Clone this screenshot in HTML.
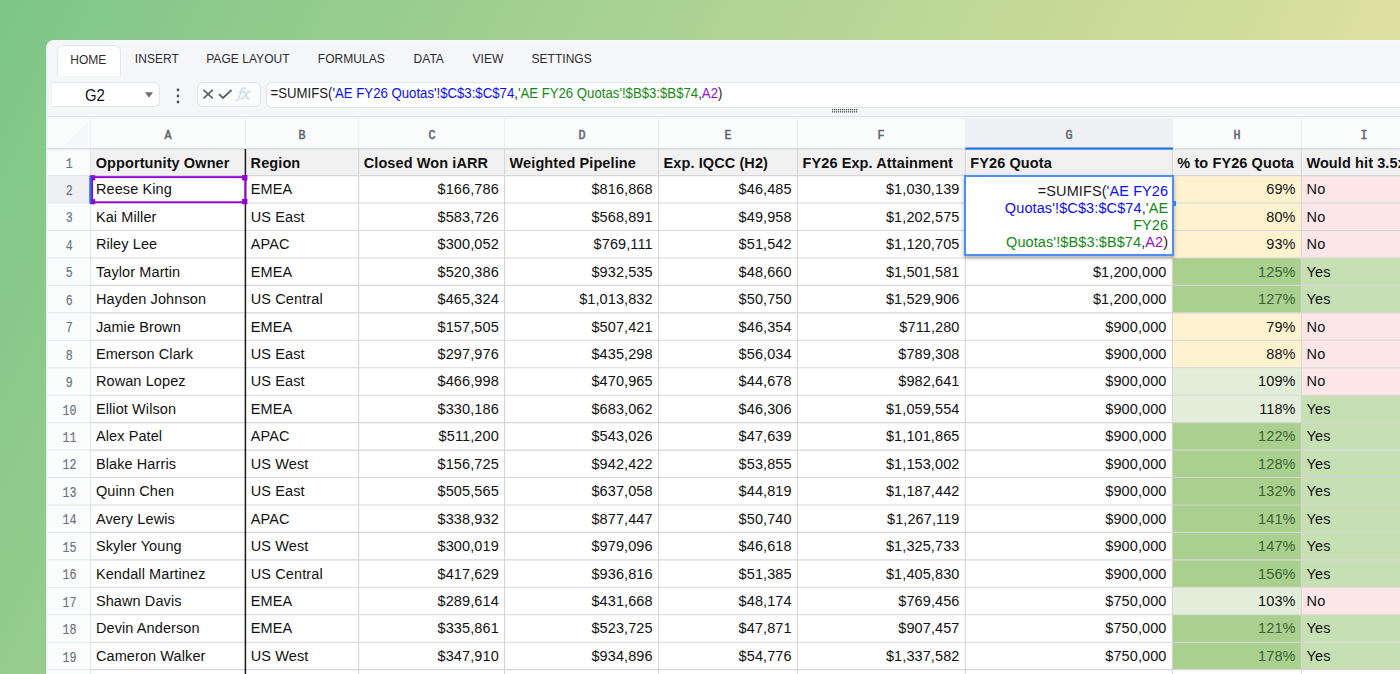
<!DOCTYPE html>
<html><head><meta charset="utf-8"><style>
*{box-sizing:border-box;margin:0;padding:0}
html,body{width:1400px;height:674px;overflow:hidden}
body{position:relative;font-family:"Liberation Sans",sans-serif;background:linear-gradient(116deg,#7dc688 0%,#f2e6a3 100%);}
.a{position:absolute}
.win{position:absolute;left:46px;top:40px;width:1400px;height:700px;background:#f5f6f8;border-top-left-radius:8px;overflow:hidden;border-left:1.5px solid #e8e8f1;border-top:1px solid #f8f8fb}
.tab{position:absolute;top:0;font-size:12px;color:#2b2d31;letter-spacing:0.05px;white-space:nowrap;line-height:14px}
.t{position:absolute;white-space:nowrap;font-size:14.5px;color:#111;line-height:16px;letter-spacing:0.1px;transform:scaleY(1.055);transform-origin:0 2.5px}
.r{text-align:right}
.hl{position:absolute;background:#d8d8d8;height:1px}
.vl{position:absolute;background:#d8d8d8;width:1px}
.mono{font-family:"Liberation Mono",monospace;color:#6a717b;font-size:14px;position:absolute;text-align:center;white-space:nowrap;line-height:14px}.mono span{display:inline-block;transform:scaleX(0.83);-webkit-text-stroke:0.15px #6a717b}
</style></head><body>

<div class="win"></div>
<div class="a" style="left:57px;top:45px;width:64px;height:31px;background:#fff;border:1px solid #e3e6ec;border-bottom:none;border-radius:6px 6px 0 0"></div>
<div class="tab" style="left:70.2px;top:52.6px">HOME</div>
<div class="tab" style="left:134.79999999999998px;top:52.0px">INSERT</div>
<div class="tab" style="left:206.2px;top:52.0px">PAGE LAYOUT</div>
<div class="tab" style="left:317.8px;top:52.0px">FORMULAS</div>
<div class="tab" style="left:413.5px;top:52.0px">DATA</div>
<div class="tab" style="left:472.5px;top:52.0px">VIEW</div>
<div class="tab" style="left:531.4000000000001px;top:52.0px">SETTINGS</div>
<div class="a" style="left:51px;top:82.2px;width:108.8px;height:24.6px;background:#fff;border:1px solid #e1e4ea;border-left:1px solid #eef0f3;border-radius:0 6px 6px 0"></div>
<div class="a" style="left:85px;top:87px;font-size:14.9px;color:#111;line-height:18px;transform:scaleY(1.1);transform-origin:0 14px">G2</div>
<svg class="a" style="left:144px;top:91px" width="10" height="8" viewBox="0 0 10 8"><path d="M1 1.2 L9 1.2 L5 6.8 Z" fill="#6b6e74"/></svg>
<svg class="a" style="left:175px;top:87px" width="6" height="18" viewBox="0 0 6 18"><circle cx="3" cy="3" r="1.4" fill="#50545a"/><circle cx="3" cy="9" r="1.4" fill="#50545a"/><circle cx="3" cy="15" r="1.4" fill="#50545a"/></svg>
<div class="a" style="left:196.5px;top:82.2px;width:64px;height:24.6px;background:#fbfcfc;border:1px solid #e1e4ea;border-radius:6px"></div>
<svg class="a" style="left:201px;top:88px" width="14" height="12" viewBox="0 0 14 12"><path d="M2.5 1.8 L11.8 10.3 M11.8 1.8 L2.5 10.3" stroke="#5a5e64" stroke-width="1.7" fill="none"/></svg>
<svg class="a" style="left:217px;top:88px" width="16" height="12" viewBox="0 0 16 12"><path d="M2 6.2 L6 10 L14.5 2" stroke="#5a5e64" stroke-width="1.8" fill="none"/></svg>
<svg class="a" style="left:0;top:0" width="1400" height="674" viewBox="0 0 1400 674"><g fill="none" stroke="#c9d9ef" stroke-width="1.3" stroke-linecap="round"><path d="M235.8 100.3 C237.3 101 238.6 99.8 239.4 96.8 L241.3 90.2 C242 88.2 243.6 87.5 245.6 88.3"/><path d="M239.2 91.8 L244.3 91.6"/><path d="M242.6 92 C244 91.3 244.9 92 245.4 93.8 L246.6 97.6 C247.2 99.1 248.4 99.3 249.6 98.3"/><path d="M250.3 91.9 C249.3 91.1 248.2 91.5 247.2 92.6 L243.3 97.9 C242.6 98.9 241.6 99 240.9 98.4"/></g></svg>
<div class="a" style="left:266px;top:82px;width:1200px;height:26px;background:#fff;border:1px solid #e1e4ea;border-right:none;border-radius:6px 0 0 6px"></div>
<div class="a" style="left:270.6px;top:86.3px;font-size:13.2px;line-height:16px;color:#1b1b1b;white-space:nowrap;transform:scaleY(1.08);transform-origin:0 12px">=SUMIFS(<span style="color:#0c0cfa">'AE FY26 Quotas'!$C$3:$C$74</span>,<span style="color:#138a13">'AE FY26 Quotas'!$B$3:$B$74</span>,<span style="color:#9a10c8">A2</span>)</div>
<div class="a" style="left:48px;top:116px;width:1352px;height:1px;background:#dfe2e8"></div>
<svg class="a" style="left:832px;top:108.8px" width="26" height="5" viewBox="0 0 26 5"><rect x="0" y="0.0" width="1.2" height="1.2" fill="#444"/><rect x="0" y="2.2" width="1.2" height="1.2" fill="#444"/><rect x="2" y="0.0" width="1.2" height="1.2" fill="#444"/><rect x="2" y="2.2" width="1.2" height="1.2" fill="#444"/><rect x="4" y="0.0" width="1.2" height="1.2" fill="#444"/><rect x="4" y="2.2" width="1.2" height="1.2" fill="#444"/><rect x="6" y="0.0" width="1.2" height="1.2" fill="#444"/><rect x="6" y="2.2" width="1.2" height="1.2" fill="#444"/><rect x="8" y="0.0" width="1.2" height="1.2" fill="#444"/><rect x="8" y="2.2" width="1.2" height="1.2" fill="#444"/><rect x="10" y="0.0" width="1.2" height="1.2" fill="#444"/><rect x="10" y="2.2" width="1.2" height="1.2" fill="#444"/><rect x="12" y="0.0" width="1.2" height="1.2" fill="#444"/><rect x="12" y="2.2" width="1.2" height="1.2" fill="#444"/><rect x="14" y="0.0" width="1.2" height="1.2" fill="#444"/><rect x="14" y="2.2" width="1.2" height="1.2" fill="#444"/><rect x="16" y="0.0" width="1.2" height="1.2" fill="#444"/><rect x="16" y="2.2" width="1.2" height="1.2" fill="#444"/><rect x="18" y="0.0" width="1.2" height="1.2" fill="#444"/><rect x="18" y="2.2" width="1.2" height="1.2" fill="#444"/><rect x="20" y="0.0" width="1.2" height="1.2" fill="#444"/><rect x="20" y="2.2" width="1.2" height="1.2" fill="#444"/><rect x="22" y="0.0" width="1.2" height="1.2" fill="#444"/><rect x="22" y="2.2" width="1.2" height="1.2" fill="#444"/><rect x="24" y="0.0" width="1.2" height="1.2" fill="#444"/><rect x="24" y="2.2" width="1.2" height="1.2" fill="#444"/></svg>
<svg class="a" style="left:0;top:0" width="1400" height="674" viewBox="0 0 1400 674"><rect x="47.5" y="119" width="1353" height="30.1" fill="#fbfcfc"/><rect x="47.5" y="149.1" width="43.2" height="530" fill="#fbfcfc"/><rect x="90.7" y="149.1" width="1309.3" height="530" fill="#fff"/><path d="M88.3 121.3 L88.3 145.8 L64 145.8 Z" fill="#f6f7f9"/><rect x="965.3" y="119" width="207.0" height="30.1" fill="#eef0f4"/><rect x="47.5" y="175.6" width="43.2" height="27.460000000000008" fill="#eef0f4"/><rect x="90.7" y="148.9" width="1309.3" height="26.69999999999999" fill="#f1f1f1"/><rect x="1172.3" y="175.6" width="129.10000000000014" height="27.460000000000008" fill="#fff3cf"/><rect x="1301.4" y="175.6" width="98.59999999999991" height="27.460000000000008" fill="#fde6e7"/><rect x="1172.3" y="203.06" width="129.10000000000014" height="27.447000000000003" fill="#fff3cf"/><rect x="1301.4" y="203.06" width="98.59999999999991" height="27.447000000000003" fill="#fde6e7"/><rect x="1172.3" y="230.507" width="129.10000000000014" height="27.447000000000003" fill="#fff3cf"/><rect x="1301.4" y="230.507" width="98.59999999999991" height="27.447000000000003" fill="#fde6e7"/><rect x="1172.3" y="257.954" width="129.10000000000014" height="27.447000000000003" fill="#a9d08e"/><rect x="1301.4" y="257.954" width="98.59999999999991" height="27.447000000000003" fill="#c6e0b4"/><rect x="1172.3" y="285.401" width="129.10000000000014" height="27.447000000000003" fill="#a9d08e"/><rect x="1301.4" y="285.401" width="98.59999999999991" height="27.447000000000003" fill="#c6e0b4"/><rect x="1172.3" y="312.848" width="129.10000000000014" height="27.446999999999946" fill="#fff3cf"/><rect x="1301.4" y="312.848" width="98.59999999999991" height="27.446999999999946" fill="#fde6e7"/><rect x="1172.3" y="340.29499999999996" width="129.10000000000014" height="27.447000000000003" fill="#fff3cf"/><rect x="1301.4" y="340.29499999999996" width="98.59999999999991" height="27.447000000000003" fill="#fde6e7"/><rect x="1172.3" y="367.74199999999996" width="129.10000000000014" height="27.447000000000003" fill="#e2eeda"/><rect x="1301.4" y="367.74199999999996" width="98.59999999999991" height="27.447000000000003" fill="#fde6e7"/><rect x="1172.3" y="395.18899999999996" width="129.10000000000014" height="27.447000000000003" fill="#e2eeda"/><rect x="1301.4" y="395.18899999999996" width="98.59999999999991" height="27.447000000000003" fill="#c6e0b4"/><rect x="1172.3" y="422.63599999999997" width="129.10000000000014" height="27.447000000000003" fill="#a9d08e"/><rect x="1301.4" y="422.63599999999997" width="98.59999999999991" height="27.447000000000003" fill="#c6e0b4"/><rect x="1172.3" y="450.08299999999997" width="129.10000000000014" height="27.447000000000003" fill="#a9d08e"/><rect x="1301.4" y="450.08299999999997" width="98.59999999999991" height="27.447000000000003" fill="#c6e0b4"/><rect x="1172.3" y="477.53" width="129.10000000000014" height="27.447000000000003" fill="#a9d08e"/><rect x="1301.4" y="477.53" width="98.59999999999991" height="27.447000000000003" fill="#c6e0b4"/><rect x="1172.3" y="504.977" width="129.10000000000014" height="27.447000000000003" fill="#a9d08e"/><rect x="1301.4" y="504.977" width="98.59999999999991" height="27.447000000000003" fill="#c6e0b4"/><rect x="1172.3" y="532.424" width="129.10000000000014" height="27.447000000000003" fill="#a9d08e"/><rect x="1301.4" y="532.424" width="98.59999999999991" height="27.447000000000003" fill="#c6e0b4"/><rect x="1172.3" y="559.871" width="129.10000000000014" height="27.447000000000003" fill="#a9d08e"/><rect x="1301.4" y="559.871" width="98.59999999999991" height="27.447000000000003" fill="#c6e0b4"/><rect x="1172.3" y="587.318" width="129.10000000000014" height="27.447000000000003" fill="#e2eeda"/><rect x="1301.4" y="587.318" width="98.59999999999991" height="27.447000000000003" fill="#fde6e7"/><rect x="1172.3" y="614.765" width="129.10000000000014" height="27.447000000000003" fill="#a9d08e"/><rect x="1301.4" y="614.765" width="98.59999999999991" height="27.447000000000003" fill="#c6e0b4"/><rect x="1172.3" y="642.212" width="129.10000000000014" height="27.447000000000003" fill="#a9d08e"/><rect x="1301.4" y="642.212" width="98.59999999999991" height="27.447000000000003" fill="#c6e0b4"/><line x1="90.7" y1="119" x2="90.7" y2="149" stroke="#eceef2" stroke-width="1"/><line x1="245.6" y1="119" x2="245.6" y2="149" stroke="#eceef2" stroke-width="1"/><line x1="358.7" y1="119" x2="358.7" y2="149" stroke="#eceef2" stroke-width="1"/><line x1="504.6" y1="119" x2="504.6" y2="149" stroke="#eceef2" stroke-width="1"/><line x1="658.5" y1="119" x2="658.5" y2="149" stroke="#eceef2" stroke-width="1"/><line x1="797.5" y1="119" x2="797.5" y2="149" stroke="#eceef2" stroke-width="1"/><line x1="965.3" y1="119" x2="965.3" y2="149" stroke="#eceef2" stroke-width="1"/><line x1="1172.3" y1="119" x2="1172.3" y2="149" stroke="#eceef2" stroke-width="1"/><line x1="1301.4" y1="119" x2="1301.4" y2="149" stroke="#eceef2" stroke-width="1"/><line x1="47.5" y1="148.9" x2="1400" y2="148.9" stroke="#cfd4dc" stroke-width="1.1"/><line x1="47.5" y1="175.60" x2="90.7" y2="175.60" stroke="#e3e6ec" stroke-width="1"/><line x1="47.5" y1="203.06" x2="90.7" y2="203.06" stroke="#e3e6ec" stroke-width="1"/><line x1="47.5" y1="230.51" x2="90.7" y2="230.51" stroke="#e3e6ec" stroke-width="1"/><line x1="47.5" y1="257.95" x2="90.7" y2="257.95" stroke="#e3e6ec" stroke-width="1"/><line x1="47.5" y1="285.40" x2="90.7" y2="285.40" stroke="#e3e6ec" stroke-width="1"/><line x1="47.5" y1="312.85" x2="90.7" y2="312.85" stroke="#e3e6ec" stroke-width="1"/><line x1="47.5" y1="340.29" x2="90.7" y2="340.29" stroke="#e3e6ec" stroke-width="1"/><line x1="47.5" y1="367.74" x2="90.7" y2="367.74" stroke="#e3e6ec" stroke-width="1"/><line x1="47.5" y1="395.19" x2="90.7" y2="395.19" stroke="#e3e6ec" stroke-width="1"/><line x1="47.5" y1="422.64" x2="90.7" y2="422.64" stroke="#e3e6ec" stroke-width="1"/><line x1="47.5" y1="450.08" x2="90.7" y2="450.08" stroke="#e3e6ec" stroke-width="1"/><line x1="47.5" y1="477.53" x2="90.7" y2="477.53" stroke="#e3e6ec" stroke-width="1"/><line x1="47.5" y1="504.98" x2="90.7" y2="504.98" stroke="#e3e6ec" stroke-width="1"/><line x1="47.5" y1="532.42" x2="90.7" y2="532.42" stroke="#e3e6ec" stroke-width="1"/><line x1="47.5" y1="559.87" x2="90.7" y2="559.87" stroke="#e3e6ec" stroke-width="1"/><line x1="47.5" y1="587.32" x2="90.7" y2="587.32" stroke="#e3e6ec" stroke-width="1"/><line x1="47.5" y1="614.76" x2="90.7" y2="614.76" stroke="#e3e6ec" stroke-width="1"/><line x1="47.5" y1="642.21" x2="90.7" y2="642.21" stroke="#e3e6ec" stroke-width="1"/><line x1="47.5" y1="669.66" x2="90.7" y2="669.66" stroke="#e3e6ec" stroke-width="1"/><line x1="47.5" y1="697.11" x2="90.7" y2="697.11" stroke="#e3e6ec" stroke-width="1"/><line x1="90.7" y1="175.60" x2="1400" y2="175.60" stroke="#d6d6d6" stroke-width="1.1"/><line x1="90.7" y1="203.06" x2="1400" y2="203.06" stroke="#d6d6d6" stroke-width="1.1"/><line x1="90.7" y1="230.51" x2="1400" y2="230.51" stroke="#d6d6d6" stroke-width="1.1"/><line x1="90.7" y1="257.95" x2="1400" y2="257.95" stroke="#d6d6d6" stroke-width="1.1"/><line x1="90.7" y1="285.40" x2="1400" y2="285.40" stroke="#d6d6d6" stroke-width="1.1"/><line x1="90.7" y1="312.85" x2="1400" y2="312.85" stroke="#d6d6d6" stroke-width="1.1"/><line x1="90.7" y1="340.29" x2="1400" y2="340.29" stroke="#d6d6d6" stroke-width="1.1"/><line x1="90.7" y1="367.74" x2="1400" y2="367.74" stroke="#d6d6d6" stroke-width="1.1"/><line x1="90.7" y1="395.19" x2="1400" y2="395.19" stroke="#d6d6d6" stroke-width="1.1"/><line x1="90.7" y1="422.64" x2="1400" y2="422.64" stroke="#d6d6d6" stroke-width="1.1"/><line x1="90.7" y1="450.08" x2="1400" y2="450.08" stroke="#d6d6d6" stroke-width="1.1"/><line x1="90.7" y1="477.53" x2="1400" y2="477.53" stroke="#d6d6d6" stroke-width="1.1"/><line x1="90.7" y1="504.98" x2="1400" y2="504.98" stroke="#d6d6d6" stroke-width="1.1"/><line x1="90.7" y1="532.42" x2="1400" y2="532.42" stroke="#d6d6d6" stroke-width="1.1"/><line x1="90.7" y1="559.87" x2="1400" y2="559.87" stroke="#d6d6d6" stroke-width="1.1"/><line x1="90.7" y1="587.32" x2="1400" y2="587.32" stroke="#d6d6d6" stroke-width="1.1"/><line x1="90.7" y1="614.76" x2="1400" y2="614.76" stroke="#d6d6d6" stroke-width="1.1"/><line x1="90.7" y1="642.21" x2="1400" y2="642.21" stroke="#d6d6d6" stroke-width="1.1"/><line x1="90.7" y1="669.66" x2="1400" y2="669.66" stroke="#d6d6d6" stroke-width="1.1"/><line x1="90.7" y1="697.11" x2="1400" y2="697.11" stroke="#d6d6d6" stroke-width="1.1"/><line x1="245.6" y1="149.1" x2="245.6" y2="674" stroke="#d6d6d6" stroke-width="1.1"/><line x1="358.7" y1="149.1" x2="358.7" y2="674" stroke="#d6d6d6" stroke-width="1.1"/><line x1="504.6" y1="149.1" x2="504.6" y2="674" stroke="#d6d6d6" stroke-width="1.1"/><line x1="658.5" y1="149.1" x2="658.5" y2="674" stroke="#d6d6d6" stroke-width="1.1"/><line x1="797.5" y1="149.1" x2="797.5" y2="674" stroke="#d6d6d6" stroke-width="1.1"/><line x1="965.3" y1="149.1" x2="965.3" y2="674" stroke="#d6d6d6" stroke-width="1.1"/><line x1="1172.3" y1="149.1" x2="1172.3" y2="674" stroke="#d6d6d6" stroke-width="1.1"/><line x1="1301.4" y1="149.1" x2="1301.4" y2="674" stroke="#d6d6d6" stroke-width="1.1"/><line x1="90.7" y1="149.1" x2="90.7" y2="674" stroke="#dde1e8" stroke-width="1"/><line x1="245.4" y1="149.1" x2="245.4" y2="674" stroke="#1e1e1e" stroke-width="1.5"/></svg>
<div class="mono" style="left:90.7px;top:129px;width:154.89999999999998px;font-size:13px"><span style="transform:scaleX(0.9);-webkit-text-stroke:0.55px #5f6670;color:#5f6670">A</span></div>
<div class="mono" style="left:245.6px;top:129px;width:113.1px;font-size:13px"><span style="transform:scaleX(0.9);-webkit-text-stroke:0.55px #5f6670;color:#5f6670">B</span></div>
<div class="mono" style="left:358.7px;top:129px;width:145.90000000000003px;font-size:13px"><span style="transform:scaleX(0.9);-webkit-text-stroke:0.55px #5f6670;color:#5f6670">C</span></div>
<div class="mono" style="left:504.6px;top:129px;width:153.89999999999998px;font-size:13px"><span style="transform:scaleX(0.9);-webkit-text-stroke:0.55px #5f6670;color:#5f6670">D</span></div>
<div class="mono" style="left:658.5px;top:129px;width:139.0px;font-size:13px"><span style="transform:scaleX(0.9);-webkit-text-stroke:0.55px #5f6670;color:#5f6670">E</span></div>
<div class="mono" style="left:797.5px;top:129px;width:167.79999999999995px;font-size:13px"><span style="transform:scaleX(0.9);-webkit-text-stroke:0.55px #5f6670;color:#5f6670">F</span></div>
<div class="mono" style="left:965.3px;top:129px;width:207.0px;font-size:13px"><span style="transform:scaleX(0.9);-webkit-text-stroke:0.55px #5f6670;color:#5f6670">G</span></div>
<div class="mono" style="left:1172.3px;top:129px;width:129.10000000000014px;font-size:13px"><span style="transform:scaleX(0.9);-webkit-text-stroke:0.55px #5f6670;color:#5f6670">H</span></div>
<div class="mono" style="left:1301.4px;top:129px;width:124.59999999999991px;font-size:13px"><span style="transform:scaleX(0.9);-webkit-text-stroke:0.55px #5f6670;color:#5f6670">I</span></div>
<div class="mono" style="left:47.5px;top:157.0265px;width:43.2px"><span>1</span></div>
<div class="mono" style="left:47.5px;top:183.9765px;width:43.2px"><span>2</span></div>
<div class="mono" style="left:47.5px;top:211.4235px;width:43.2px"><span>3</span></div>
<div class="mono" style="left:47.5px;top:238.8705px;width:43.2px"><span>4</span></div>
<div class="mono" style="left:47.5px;top:266.3175px;width:43.2px"><span>5</span></div>
<div class="mono" style="left:47.5px;top:293.7645px;width:43.2px"><span>6</span></div>
<div class="mono" style="left:47.5px;top:321.2115px;width:43.2px"><span>7</span></div>
<div class="mono" style="left:47.5px;top:348.6585px;width:43.2px"><span>8</span></div>
<div class="mono" style="left:47.5px;top:376.1055px;width:43.2px"><span>9</span></div>
<div class="mono" style="left:47.5px;top:403.5525px;width:43.2px"><span>10</span></div>
<div class="mono" style="left:47.5px;top:430.9995px;width:43.2px"><span>11</span></div>
<div class="mono" style="left:47.5px;top:458.44649999999996px;width:43.2px"><span>12</span></div>
<div class="mono" style="left:47.5px;top:485.89349999999996px;width:43.2px"><span>13</span></div>
<div class="mono" style="left:47.5px;top:513.3405px;width:43.2px"><span>14</span></div>
<div class="mono" style="left:47.5px;top:540.7875px;width:43.2px"><span>15</span></div>
<div class="mono" style="left:47.5px;top:568.2345px;width:43.2px"><span>16</span></div>
<div class="mono" style="left:47.5px;top:595.6815px;width:43.2px"><span>17</span></div>
<div class="mono" style="left:47.5px;top:623.1285px;width:43.2px"><span>18</span></div>
<div class="mono" style="left:47.5px;top:650.5755px;width:43.2px"><span>19</span></div>
<div class="t" style="left:95.7px;top:153.9px;font-weight:bold">Opportunity Owner</div>
<div class="t" style="left:250.6px;top:153.9px;font-weight:bold">Region</div>
<div class="t" style="left:363.7px;top:153.9px;font-weight:bold">Closed Won iARR</div>
<div class="t" style="left:509.6px;top:153.9px;font-weight:bold">Weighted Pipeline</div>
<div class="t" style="left:663.5px;top:153.9px;font-weight:bold">Exp. IQCC (H2)</div>
<div class="t" style="left:802.5px;top:153.9px;font-weight:bold">FY26 Exp. Attainment</div>
<div class="t" style="left:970.3px;top:153.9px;font-weight:bold">FY26 Quota</div>
<div class="t" style="left:1177.3px;top:153.9px;font-weight:bold">% to FY26 Quota</div>
<div class="t" style="left:1306.4px;top:153.9px;font-weight:bold">Would hit 3.5x Quota</div>
<div class="t" style="left:95.9px;top:180.303px;color:#111">Reese King</div>
<div class="t" style="left:250.79999999999998px;top:180.303px;color:#111">EMEA</div>
<div class="t r" style="right:901.1999999999999px;top:180.303px;color:#111">$166,786</div>
<div class="t r" style="right:747.3px;top:180.303px;color:#111">$816,868</div>
<div class="t r" style="right:608.3px;top:180.303px;color:#111">$46,485</div>
<div class="t r" style="right:440.50000000000006px;top:180.303px;color:#111">$1,030,139</div>
<div class="t r" style="right:104.3999999999999px;top:180.303px;color:#111">69%</div>
<div class="t" style="left:1306.6000000000001px;top:180.303px;color:#111">No</div>
<div class="t" style="left:95.9px;top:207.75px;color:#111">Kai Miller</div>
<div class="t" style="left:250.79999999999998px;top:207.75px;color:#111">US East</div>
<div class="t r" style="right:901.1999999999999px;top:207.75px;color:#111">$583,726</div>
<div class="t r" style="right:747.3px;top:207.75px;color:#111">$568,891</div>
<div class="t r" style="right:608.3px;top:207.75px;color:#111">$49,958</div>
<div class="t r" style="right:440.50000000000006px;top:207.75px;color:#111">$1,202,575</div>
<div class="t r" style="right:104.3999999999999px;top:207.75px;color:#111">80%</div>
<div class="t" style="left:1306.6000000000001px;top:207.75px;color:#111">No</div>
<div class="t" style="left:95.9px;top:235.197px;color:#111">Riley Lee</div>
<div class="t" style="left:250.79999999999998px;top:235.197px;color:#111">APAC</div>
<div class="t r" style="right:901.1999999999999px;top:235.197px;color:#111">$300,052</div>
<div class="t r" style="right:747.3px;top:235.197px;color:#111">$769,111</div>
<div class="t r" style="right:608.3px;top:235.197px;color:#111">$51,542</div>
<div class="t r" style="right:440.50000000000006px;top:235.197px;color:#111">$1,120,705</div>
<div class="t r" style="right:104.3999999999999px;top:235.197px;color:#111">93%</div>
<div class="t" style="left:1306.6000000000001px;top:235.197px;color:#111">No</div>
<div class="t" style="left:95.9px;top:262.644px;color:#111">Taylor Martin</div>
<div class="t" style="left:250.79999999999998px;top:262.644px;color:#111">EMEA</div>
<div class="t r" style="right:901.1999999999999px;top:262.644px;color:#111">$520,386</div>
<div class="t r" style="right:747.3px;top:262.644px;color:#111">$932,535</div>
<div class="t r" style="right:608.3px;top:262.644px;color:#111">$48,660</div>
<div class="t r" style="right:440.50000000000006px;top:262.644px;color:#111">$1,501,581</div>
<div class="t r" style="right:233.50000000000006px;top:262.644px;color:#111">$1,200,000</div>
<div class="t r" style="right:104.3999999999999px;top:262.644px;color:#3a6330">125%</div>
<div class="t" style="left:1306.6000000000001px;top:262.644px;color:#111">Yes</div>
<div class="t" style="left:95.9px;top:290.091px;color:#111">Hayden Johnson</div>
<div class="t" style="left:250.79999999999998px;top:290.091px;color:#111">US Central</div>
<div class="t r" style="right:901.1999999999999px;top:290.091px;color:#111">$465,324</div>
<div class="t r" style="right:747.3px;top:290.091px;color:#111">$1,013,832</div>
<div class="t r" style="right:608.3px;top:290.091px;color:#111">$50,750</div>
<div class="t r" style="right:440.50000000000006px;top:290.091px;color:#111">$1,529,906</div>
<div class="t r" style="right:233.50000000000006px;top:290.091px;color:#111">$1,200,000</div>
<div class="t r" style="right:104.3999999999999px;top:290.091px;color:#3a6330">127%</div>
<div class="t" style="left:1306.6000000000001px;top:290.091px;color:#111">Yes</div>
<div class="t" style="left:95.9px;top:317.538px;color:#111">Jamie Brown</div>
<div class="t" style="left:250.79999999999998px;top:317.538px;color:#111">EMEA</div>
<div class="t r" style="right:901.1999999999999px;top:317.538px;color:#111">$157,505</div>
<div class="t r" style="right:747.3px;top:317.538px;color:#111">$507,421</div>
<div class="t r" style="right:608.3px;top:317.538px;color:#111">$46,354</div>
<div class="t r" style="right:440.50000000000006px;top:317.538px;color:#111">$711,280</div>
<div class="t r" style="right:233.50000000000006px;top:317.538px;color:#111">$900,000</div>
<div class="t r" style="right:104.3999999999999px;top:317.538px;color:#111">79%</div>
<div class="t" style="left:1306.6000000000001px;top:317.538px;color:#111">No</div>
<div class="t" style="left:95.9px;top:344.985px;color:#111">Emerson Clark</div>
<div class="t" style="left:250.79999999999998px;top:344.985px;color:#111">US East</div>
<div class="t r" style="right:901.1999999999999px;top:344.985px;color:#111">$297,976</div>
<div class="t r" style="right:747.3px;top:344.985px;color:#111">$435,298</div>
<div class="t r" style="right:608.3px;top:344.985px;color:#111">$56,034</div>
<div class="t r" style="right:440.50000000000006px;top:344.985px;color:#111">$789,308</div>
<div class="t r" style="right:233.50000000000006px;top:344.985px;color:#111">$900,000</div>
<div class="t r" style="right:104.3999999999999px;top:344.985px;color:#111">88%</div>
<div class="t" style="left:1306.6000000000001px;top:344.985px;color:#111">No</div>
<div class="t" style="left:95.9px;top:372.432px;color:#111">Rowan Lopez</div>
<div class="t" style="left:250.79999999999998px;top:372.432px;color:#111">US East</div>
<div class="t r" style="right:901.1999999999999px;top:372.432px;color:#111">$466,998</div>
<div class="t r" style="right:747.3px;top:372.432px;color:#111">$470,965</div>
<div class="t r" style="right:608.3px;top:372.432px;color:#111">$44,678</div>
<div class="t r" style="right:440.50000000000006px;top:372.432px;color:#111">$982,641</div>
<div class="t r" style="right:233.50000000000006px;top:372.432px;color:#111">$900,000</div>
<div class="t r" style="right:104.3999999999999px;top:372.432px;color:#111">109%</div>
<div class="t" style="left:1306.6000000000001px;top:372.432px;color:#111">No</div>
<div class="t" style="left:95.9px;top:399.879px;color:#111">Elliot Wilson</div>
<div class="t" style="left:250.79999999999998px;top:399.879px;color:#111">EMEA</div>
<div class="t r" style="right:901.1999999999999px;top:399.879px;color:#111">$330,186</div>
<div class="t r" style="right:747.3px;top:399.879px;color:#111">$683,062</div>
<div class="t r" style="right:608.3px;top:399.879px;color:#111">$46,306</div>
<div class="t r" style="right:440.50000000000006px;top:399.879px;color:#111">$1,059,554</div>
<div class="t r" style="right:233.50000000000006px;top:399.879px;color:#111">$900,000</div>
<div class="t r" style="right:104.3999999999999px;top:399.879px;color:#111">118%</div>
<div class="t" style="left:1306.6000000000001px;top:399.879px;color:#111">Yes</div>
<div class="t" style="left:95.9px;top:427.326px;color:#111">Alex Patel</div>
<div class="t" style="left:250.79999999999998px;top:427.326px;color:#111">APAC</div>
<div class="t r" style="right:901.1999999999999px;top:427.326px;color:#111">$511,200</div>
<div class="t r" style="right:747.3px;top:427.326px;color:#111">$543,026</div>
<div class="t r" style="right:608.3px;top:427.326px;color:#111">$47,639</div>
<div class="t r" style="right:440.50000000000006px;top:427.326px;color:#111">$1,101,865</div>
<div class="t r" style="right:233.50000000000006px;top:427.326px;color:#111">$900,000</div>
<div class="t r" style="right:104.3999999999999px;top:427.326px;color:#3a6330">122%</div>
<div class="t" style="left:1306.6000000000001px;top:427.326px;color:#111">Yes</div>
<div class="t" style="left:95.9px;top:454.773px;color:#111">Blake Harris</div>
<div class="t" style="left:250.79999999999998px;top:454.773px;color:#111">US West</div>
<div class="t r" style="right:901.1999999999999px;top:454.773px;color:#111">$156,725</div>
<div class="t r" style="right:747.3px;top:454.773px;color:#111">$942,422</div>
<div class="t r" style="right:608.3px;top:454.773px;color:#111">$53,855</div>
<div class="t r" style="right:440.50000000000006px;top:454.773px;color:#111">$1,153,002</div>
<div class="t r" style="right:233.50000000000006px;top:454.773px;color:#111">$900,000</div>
<div class="t r" style="right:104.3999999999999px;top:454.773px;color:#3a6330">128%</div>
<div class="t" style="left:1306.6000000000001px;top:454.773px;color:#111">Yes</div>
<div class="t" style="left:95.9px;top:482.21999999999997px;color:#111">Quinn Chen</div>
<div class="t" style="left:250.79999999999998px;top:482.21999999999997px;color:#111">US East</div>
<div class="t r" style="right:901.1999999999999px;top:482.21999999999997px;color:#111">$505,565</div>
<div class="t r" style="right:747.3px;top:482.21999999999997px;color:#111">$637,058</div>
<div class="t r" style="right:608.3px;top:482.21999999999997px;color:#111">$44,819</div>
<div class="t r" style="right:440.50000000000006px;top:482.21999999999997px;color:#111">$1,187,442</div>
<div class="t r" style="right:233.50000000000006px;top:482.21999999999997px;color:#111">$900,000</div>
<div class="t r" style="right:104.3999999999999px;top:482.21999999999997px;color:#3a6330">132%</div>
<div class="t" style="left:1306.6000000000001px;top:482.21999999999997px;color:#111">Yes</div>
<div class="t" style="left:95.9px;top:509.667px;color:#111">Avery Lewis</div>
<div class="t" style="left:250.79999999999998px;top:509.667px;color:#111">APAC</div>
<div class="t r" style="right:901.1999999999999px;top:509.667px;color:#111">$338,932</div>
<div class="t r" style="right:747.3px;top:509.667px;color:#111">$877,447</div>
<div class="t r" style="right:608.3px;top:509.667px;color:#111">$50,740</div>
<div class="t r" style="right:440.50000000000006px;top:509.667px;color:#111">$1,267,119</div>
<div class="t r" style="right:233.50000000000006px;top:509.667px;color:#111">$900,000</div>
<div class="t r" style="right:104.3999999999999px;top:509.667px;color:#3a6330">141%</div>
<div class="t" style="left:1306.6000000000001px;top:509.667px;color:#111">Yes</div>
<div class="t" style="left:95.9px;top:537.114px;color:#111">Skyler Young</div>
<div class="t" style="left:250.79999999999998px;top:537.114px;color:#111">US West</div>
<div class="t r" style="right:901.1999999999999px;top:537.114px;color:#111">$300,019</div>
<div class="t r" style="right:747.3px;top:537.114px;color:#111">$979,096</div>
<div class="t r" style="right:608.3px;top:537.114px;color:#111">$46,618</div>
<div class="t r" style="right:440.50000000000006px;top:537.114px;color:#111">$1,325,733</div>
<div class="t r" style="right:233.50000000000006px;top:537.114px;color:#111">$900,000</div>
<div class="t r" style="right:104.3999999999999px;top:537.114px;color:#3a6330">147%</div>
<div class="t" style="left:1306.6000000000001px;top:537.114px;color:#111">Yes</div>
<div class="t" style="left:95.9px;top:564.5609999999999px;color:#111">Kendall Martinez</div>
<div class="t" style="left:250.79999999999998px;top:564.5609999999999px;color:#111">US Central</div>
<div class="t r" style="right:901.1999999999999px;top:564.5609999999999px;color:#111">$417,629</div>
<div class="t r" style="right:747.3px;top:564.5609999999999px;color:#111">$936,816</div>
<div class="t r" style="right:608.3px;top:564.5609999999999px;color:#111">$51,385</div>
<div class="t r" style="right:440.50000000000006px;top:564.5609999999999px;color:#111">$1,405,830</div>
<div class="t r" style="right:233.50000000000006px;top:564.5609999999999px;color:#111">$900,000</div>
<div class="t r" style="right:104.3999999999999px;top:564.5609999999999px;color:#3a6330">156%</div>
<div class="t" style="left:1306.6000000000001px;top:564.5609999999999px;color:#111">Yes</div>
<div class="t" style="left:95.9px;top:592.008px;color:#111">Shawn Davis</div>
<div class="t" style="left:250.79999999999998px;top:592.008px;color:#111">EMEA</div>
<div class="t r" style="right:901.1999999999999px;top:592.008px;color:#111">$289,614</div>
<div class="t r" style="right:747.3px;top:592.008px;color:#111">$431,668</div>
<div class="t r" style="right:608.3px;top:592.008px;color:#111">$48,174</div>
<div class="t r" style="right:440.50000000000006px;top:592.008px;color:#111">$769,456</div>
<div class="t r" style="right:233.50000000000006px;top:592.008px;color:#111">$750,000</div>
<div class="t r" style="right:104.3999999999999px;top:592.008px;color:#111">103%</div>
<div class="t" style="left:1306.6000000000001px;top:592.008px;color:#111">No</div>
<div class="t" style="left:95.9px;top:619.4549999999999px;color:#111">Devin Anderson</div>
<div class="t" style="left:250.79999999999998px;top:619.4549999999999px;color:#111">EMEA</div>
<div class="t r" style="right:901.1999999999999px;top:619.4549999999999px;color:#111">$335,861</div>
<div class="t r" style="right:747.3px;top:619.4549999999999px;color:#111">$523,725</div>
<div class="t r" style="right:608.3px;top:619.4549999999999px;color:#111">$47,871</div>
<div class="t r" style="right:440.50000000000006px;top:619.4549999999999px;color:#111">$907,457</div>
<div class="t r" style="right:233.50000000000006px;top:619.4549999999999px;color:#111">$750,000</div>
<div class="t r" style="right:104.3999999999999px;top:619.4549999999999px;color:#3a6330">121%</div>
<div class="t" style="left:1306.6000000000001px;top:619.4549999999999px;color:#111">Yes</div>
<div class="t" style="left:95.9px;top:646.902px;color:#111">Cameron Walker</div>
<div class="t" style="left:250.79999999999998px;top:646.902px;color:#111">US West</div>
<div class="t r" style="right:901.1999999999999px;top:646.902px;color:#111">$347,910</div>
<div class="t r" style="right:747.3px;top:646.902px;color:#111">$934,896</div>
<div class="t r" style="right:608.3px;top:646.902px;color:#111">$54,776</div>
<div class="t r" style="right:440.50000000000006px;top:646.902px;color:#111">$1,337,582</div>
<div class="t r" style="right:233.50000000000006px;top:646.902px;color:#111">$750,000</div>
<div class="t r" style="right:104.3999999999999px;top:646.902px;color:#3a6330">178%</div>
<div class="t" style="left:1306.6000000000001px;top:646.902px;color:#111">Yes</div>
<svg class="a" style="left:0;top:0" width="1400" height="674" viewBox="0 0 1400 674"><rect x="965.3" y="147.5" width="207.6" height="2.1" fill="#1b6fe4"/></svg>
<svg class="a" style="left:0;top:0" width="1400" height="674" viewBox="0 0 1400 674"><rect x="92.05" y="177.15" width="153.4" height="25.1" fill="none" stroke="#9300d4" stroke-width="1.9"/><rect x="90.2" y="175.2" width="5" height="5.2" fill="#9300d4"/><rect x="242.1" y="175.1" width="5.3" height="5.4" fill="#9300d4"/><rect x="90.2" y="199.1" width="5" height="5.2" fill="#9300d4"/><rect x="242.1" y="199.0" width="5.3" height="5.2" fill="#9300d4"/></svg>
<svg class="a" style="left:0;top:0" width="1400" height="674" viewBox="0 0 1400 674"><rect x="89.3" y="175.9" width="2.1" height="27.6" fill="#1b6fe4"/></svg>
<div class="a" style="left:964px;top:174.9px;width:209.8px;height:80.9px;background:#fff;border:2px solid #4f8ff3;box-shadow:0 2px 4px rgba(0,0,0,0.32)"></div>
<div class="a" style="left:1173px;top:200.5px;width:3px;height:5px;background:#3b7de9"></div>
<div class="t r" style="right:231.79999999999995px;top:182.3px;color:#1b1b1b">=SUMIFS(<span style="color:#0c0cfa">'AE FY26</span></div>
<div class="t r" style="right:231.79999999999995px;top:199.3px;color:#1b1b1b"><span style="color:#0c0cfa">Quotas'!$C$3:$C$74</span>,<span style="color:#138a13">'AE</span></div>
<div class="t r" style="right:231.79999999999995px;top:216.3px;color:#1b1b1b"><span style="color:#138a13">FY26</span></div>
<div class="t r" style="right:231.79999999999995px;top:233.3px;color:#1b1b1b"><span style="color:#138a13">Quotas'!$B$3:$B$74</span>,<span style="color:#9a10c8">A2</span>)</div>
</body></html>
